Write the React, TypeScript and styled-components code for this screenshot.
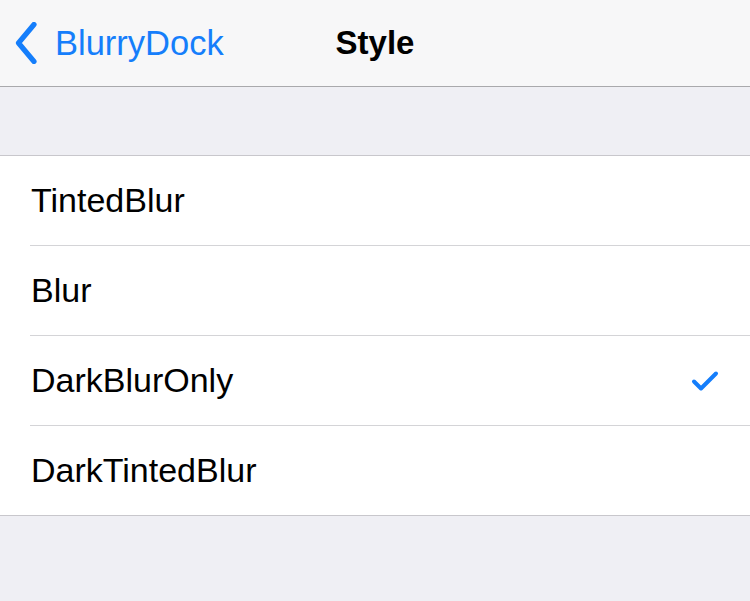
import React, { FC } from "react";
import styled, { createGlobalStyle } from "styled-components";

const GlobalStyle = createGlobalStyle`
  html, body {
    margin: 0;
    padding: 0;
    background: #efeff4;
    font-family: "Liberation Sans", Arial, sans-serif;
  }
`;

const styles = ["TintedBlur", "Blur", "DarkBlurOnly", "DarkTintedBlur"];
const selected = "DarkBlurOnly";

const App: FC = (): JSX.Element => {
  return (
    <Page>
      <GlobalStyle />
      <NavBar>
        <BackButton type="button">
          <svg width="22" height="42" viewBox="0 0 22 42">
            <polyline
              points="19,2.5 3.5,21 19,39.5"
              fill="none"
              stroke="#157efb"
              strokeWidth="5.2"
              strokeLinecap="round"
              strokeLinejoin="round"
            />
          </svg>
          <BackLabel>BlurryDock</BackLabel>
        </BackButton>
        <Title>Style</Title>
      </NavBar>
      <Spacer />
      <List>
        {styles.map((name) => (
          <Row key={name}>
            <Label>{name}</Label>
            {name === selected && (
              <svg width="28" height="22" viewBox="0 0 28 22">
                <polyline
                  points="3,11.5 10,18.5 25,3.5"
                  fill="none"
                  stroke="#157efb"
                  strokeWidth="4"
                  strokeLinecap="round"
                  strokeLinejoin="round"
                />
              </svg>
            )}
          </Row>
        ))}
      </List>
    </Page>
  );
};

export default App;

const Page = styled.div`
  width: 750px;
  min-height: 601px;
  background: #efeff4;
`;
const NavBar = styled.header`
  height: 86px;
  background: #f7f7f8;
  border-bottom: 1px solid #a9a9ac;
  display: flex;
  align-items: center;
  justify-content: center;
  position: relative;
`;
const BackButton = styled.button`
  position: absolute;
  left: 15px;
  top: 0;
  bottom: 0;
  display: flex;
  align-items: center;
  gap: 18px;
  padding: 0;
  border: none;
  background: none;
  cursor: pointer;
`;
const BackLabel = styled.span`
  font-size: 34.5px;
  color: #157efb;
  font-family: "Liberation Sans", Arial, sans-serif;
`;
const Title = styled.h1`
  margin: 0;
  font-size: 33px;
  font-weight: 700;
  color: #000;
`;
const Spacer = styled.div`
  height: 68px;
`;
const List = styled.ul`
  margin: 0;
  padding: 0 0 0 30px;
  list-style: none;
  background: #fff;
  border-top: 1px solid #c8c7cc;
  border-bottom: 1px solid #c8c7cc;
`;
const Row = styled.li`
  height: 89px;
  display: flex;
  align-items: center;
  justify-content: space-between;
  padding: 0 31px 0 1px;
  border-bottom: 1px solid #d4d4d7;
  &:last-child {
    border-bottom: none;
  }
`;
const Label = styled.span`
  font-size: 34px;
  color: #000;
`;
